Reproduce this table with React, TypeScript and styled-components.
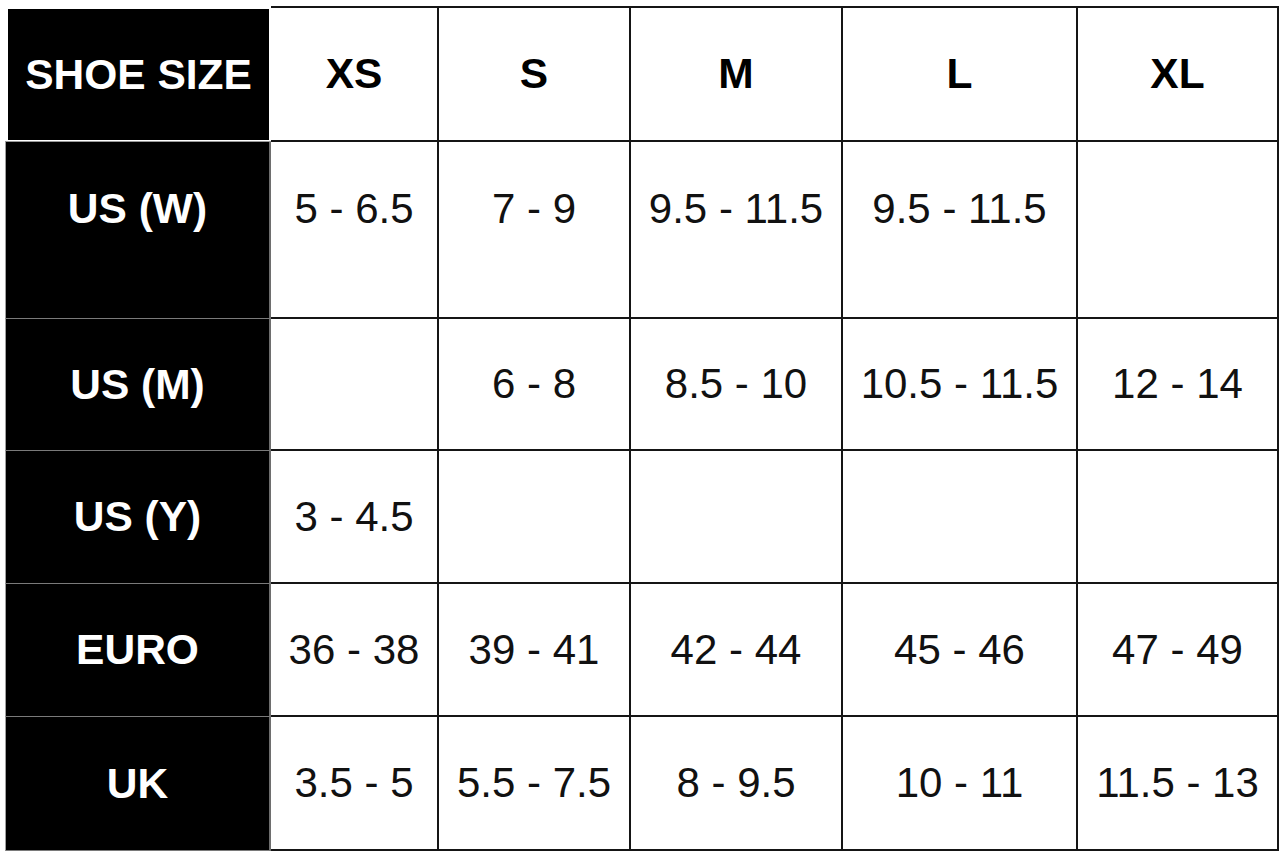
import { createGlobalStyle, styled } from "styled-components";

const sizes = ["XS", "S", "M", "L", "XL"];

const rows = [
  { label: "US (W)", values: ["5 - 6.5", "7 - 9", "9.5 - 11.5", "9.5 - 11.5", ""], tall: true },
  { label: "US (M)", values: ["", "6 - 8", "8.5 - 10", "10.5 - 11.5", "12 - 14"] },
  { label: "US (Y)", values: ["3 - 4.5", "", "", "", ""] },
  { label: "EURO", values: ["36 - 38", "39 - 41", "42 - 44", "45 - 46", "47 - 49"] },
  { label: "UK", values: ["3.5 - 5", "5.5 - 7.5", "8 - 9.5", "10 - 11", "11.5 - 13"] },
];

function App() {
  return (
    <>
      <GlobalStyle />
      <StPage>
        <StChart>
          <StCorner>
            <StCornerLabel>SHOE SIZE</StCornerLabel>
          </StCorner>
          {sizes.map((size) => (
            <StHeadCell key={size}>{size}</StHeadCell>
          ))}
          {rows.map((row) => (
            <StRow key={row.label}>
              <StRowLabel $tall={row.tall}>{row.label}</StRowLabel>
              {row.values.map((value, i) => (
                <StValueCell key={i} $tall={row.tall}>
                  {value}
                </StValueCell>
              ))}
            </StRow>
          ))}
        </StChart>
      </StPage>
    </>
  );
}

export default App;

const GlobalStyle = createGlobalStyle`
  html, body {
    margin: 0;
    padding: 0;
    background: #ffffff;
  }
  * {
    box-sizing: border-box;
  }
`;

const StPage = styled.div`
  width: 1284px;
  height: 858px;
  padding: 6px 0 0 5px;
  background: #ffffff;
  font-family: "Liberation Sans", Arial, sans-serif;
`;

const StChart = styled.div`
  display: grid;
  grid-template-columns: 266px 168px 192px 212px 235px 201px;
  grid-template-rows: 136px 177px 132px 133px 133px 134px;
`;

const StRow = styled.div`
  display: contents;
`;

const StCorner = styled.div`
  display: flex;
  padding: 3px 2px 1px 3px;
  background: #ffffff;
  border-bottom: 1px solid #9a9a9a;
`;

const StCornerLabel = styled.div`
  flex: 1;
  display: flex;
  align-items: center;
  justify-content: center;
  background: #000000;
  color: #ffffff;
  font-size: 42.5px;
  font-weight: 700;
`;

const StHeadCell = styled.div`
  display: flex;
  align-items: center;
  justify-content: center;
  border-top: 2px solid #151515;
  border-right: 2px solid #151515;
  border-bottom: 2px solid #151515;
  color: #000000;
  font-size: 42.5px;
  font-weight: 700;
`;

const StRowLabel = styled.div<{ $tall?: boolean }>`
  display: flex;
  align-items: center;
  justify-content: center;
  padding-bottom: ${(p) => (p.$tall ? "42px" : "0")};
  background: #000000;
  border-left: 1px solid #a0a0a0;
  border-right: 2px solid #6e6e6e;
  border-bottom: 1px solid #7a7a7a;
  color: #ffffff;
  font-size: 42.5px;
  font-weight: 700;
`;

const StValueCell = styled.div<{ $tall?: boolean }>`
  display: flex;
  align-items: center;
  justify-content: center;
  padding-bottom: ${(p) => (p.$tall ? "42px" : "0")};
  border-right: 2px solid #151515;
  border-bottom: 2px solid #151515;
  color: #111111;
  font-size: 42px;
  font-weight: 400;
  white-space: nowrap;
`;
